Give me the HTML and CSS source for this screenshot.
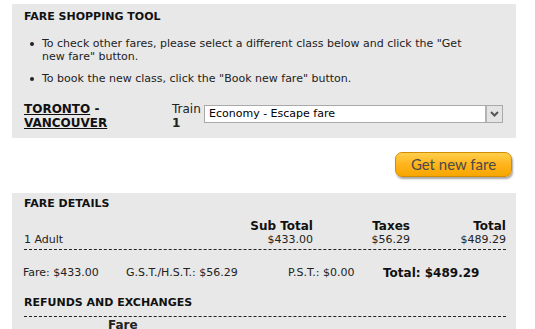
FILE: index.html
```html
<!DOCTYPE html>
<html lang="en">
  <head>
    <meta charset="UTF-8" />
    <title>Fare Shopping Tool</title>
    <link rel="stylesheet" href="styles.css">
  </head>
  <body>
    <!-- Fare shopping -->
    <div class="panel shopping">
      <h2>FARE SHOPPING TOOL</h2>
      <ul class="tips">
        <li>To check other fares, please select a different class below and click the "Get new fare" button.</li>
        <li>To book the new class, click the "Book new fare" button.</li>
      </ul>
      <div class="route-row">
        <div class="route"><a href="#">TORONTO</a> -<br><a href="#">VANCOUVER</a></div>
        <div class="train">Train<br><b>1</b></div>
        <div class="select">
          <span class="select-text">Economy - Escape fare</span>
          <span class="select-arrow">
            <svg width="9" height="6" viewBox="0 0 9 6"><path d="M1 1 L4.5 4.5 L8 1" fill="none" stroke="#555" stroke-width="2"/></svg>
          </span>
        </div>
      </div>
    </div>

    <div class="actions">
      <button class="fare-btn">Get new fare</button>
    </div>

    <!-- Fare details -->
    <div class="panel details">
      <h2>FARE DETAILS</h2>
      <div class="fare-table">
        <div></div>
        <div class="th">Sub Total</div>
        <div class="th">Taxes</div>
        <div class="th">Total</div>
        <div>1 Adult</div>
        <div class="num">$433.00</div>
        <div class="num">$56.29</div>
        <div class="num">$489.29</div>
      </div>
      <div class="summary">
        <span>Fare: $433.00</span>
        <span>G.S.T./H.S.T.: $56.29</span>
        <span>P.S.T.: $0.00</span>
        <b>Total: $489.29</b>
      </div>
      <h2 class="refunds">REFUNDS AND EXCHANGES</h2>
      <div class="refund-head"><b>Fare</b></div>
    </div>
  </body>
</html>
```

FILE: styles.css
```css
* {
  margin: 0;
  padding: 0;
  box-sizing: border-box;
}

body {
  font-family: "DejaVu Sans", Verdana, sans-serif;
  font-size: 11px;
  color: #222;
  background: #fff;
  padding: 4px 0 0 12px;
  overflow: hidden;
}

.panel {
  width: 504px;
  background: #e8e8e8;
  padding: 5px 10px 0 12px;
}

h2 {
  font-size: 11px;
  font-weight: bold;
  color: #111;
  line-height: 16px;
}

.shopping {
  height: 134px;
}

.tips {
  list-style: none;
  margin-top: 12px;
  max-width: 455px;
}

.tips li {
  position: relative;
  padding-left: 18px;
  line-height: 13px;
  margin-bottom: 9px;
}

.tips li::before {
  content: "";
  position: absolute;
  left: 6px;
  top: 5px;
  width: 4px;
  height: 4px;
  border-radius: 50%;
  background: #222;
}

.route-row {
  display: flex;
  align-items: flex-start;
  margin-top: 17px;
}

.route {
  width: 148px;
  font-size: 12px;
  font-weight: bold;
  line-height: 14px;
  color: #111;
}

.route a {
  color: #111;
}

.train {
  width: 32px;
  font-size: 12px;
  line-height: 14px;
}

.select {
  display: flex;
  width: 299px;
  height: 18px;
  margin-top: 3px;
  background: #fff;
  border: 1px solid #a9a9a9;
}

.select-text {
  flex: 1;
  line-height: 16px;
  padding-left: 4px;
  color: #000;
}

.select-arrow {
  width: 17px;
  display: flex;
  align-items: center;
  justify-content: center;
  background: #e4e4e4;
  border-left: 2px solid #b4b4b4;
}

.actions {
  width: 504px;
  display: flex;
  justify-content: flex-end;
  padding: 14px 4px 16px 0;
}

.fare-btn {
  width: 117px;
  height: 25px;
  border: 1px solid #d48c00;
  border-radius: 7px;
  background: linear-gradient(#ffcf4d, #ffb41c 50%, #f7a600);
  box-shadow: 1px 2px 2px rgba(0, 0, 0, 0.35);
  font-family: Lato, "Open Sans", sans-serif;
  font-size: 15px;
  color: #4a4a4a;
  padding-bottom: 1px;
}

.details {
  height: 140px;
  padding-top: 3px;
}

.fare-table {
  display: grid;
  grid-template-columns: 189px 100px 97px 96px;
  margin-top: 8px;
  padding-bottom: 3px;
  border-bottom: 1px dashed #222;
  line-height: 13px;
}

.th {
  font-weight: bold;
  font-size: 12px;
  text-align: right;
  color: #111;
}

.num {
  text-align: right;
}

.summary {
  display: grid;
  grid-template-columns: 103px 162px 95px auto;
  margin: 16px 0 0 -1px;
  line-height: 14px;
}

.summary b {
  font-size: 12px;
  color: #111;
}

.refunds {
  margin-top: 15px;
  padding-bottom: 5px;
  border-bottom: 1px dashed #222;
}

.refund-head {
  padding-left: 84px;
  font-size: 12px;
  line-height: 16px;
}
```
